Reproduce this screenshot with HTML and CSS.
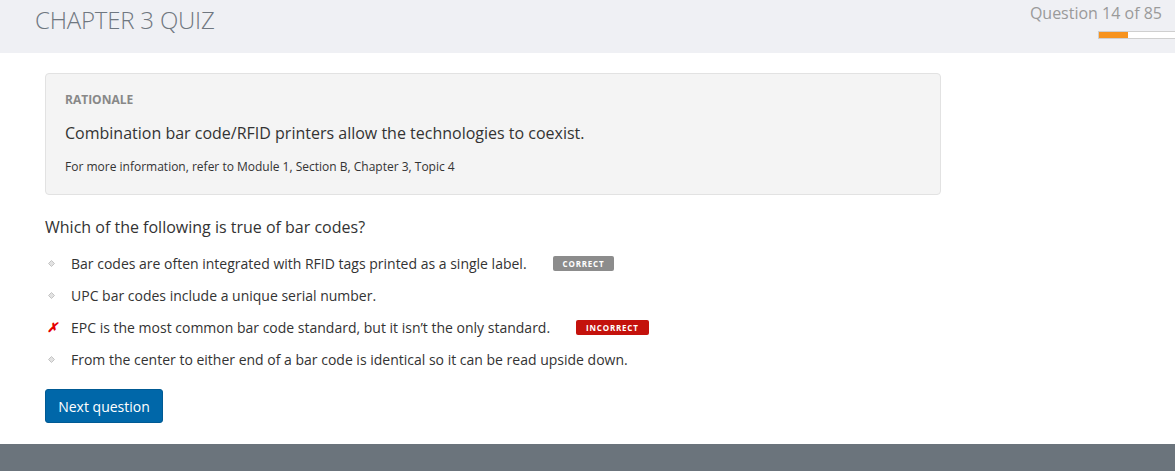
FILE: index.html
```html
<!DOCTYPE html>
<html>
<head>
<meta charset="utf-8">
<link rel="stylesheet" href="styles.css">
</head>
<body>
<header class="topbar">
  <h1 class="title">CHAPTER 3 QUIZ</h1>
  <div class="progress">
    <div class="progress-label">Question 14 of 85</div>
    <div class="progress-track"><div class="progress-fill" style="width:29px"></div></div>
  </div>
</header>
<main class="content">
  <section class="rationale">
    <div class="rationale-head">RATIONALE</div>
    <p class="rationale-text">Combination bar code/RFID printers allow the technologies to coexist.</p>
    <p class="rationale-ref">For more information, refer to Module 1, Section B, Chapter 3, Topic 4</p>
  </section>
  <h2 class="question">Which of the following is true of bar codes?</h2>
  <ul class="options">
    <li class="option"><span class="mark"><svg class="dot" width="7" height="7" viewBox="0 0 7 7"><path d="M3.5 0.5 L6.5 3.5 L3.5 6.5 L0.5 3.5 Z" fill="#e2e2e2" stroke="#c4c4c4" stroke-width="1"/></svg></span><span class="opt-text">Bar codes are often integrated with RFID tags printed as a single label.</span><span class="badge badge-correct">CORRECT</span></li>
    <li class="option"><span class="mark"><svg class="dot" width="7" height="7" viewBox="0 0 7 7"><path d="M3.5 0.5 L6.5 3.5 L3.5 6.5 L0.5 3.5 Z" fill="#e2e2e2" stroke="#c4c4c4" stroke-width="1"/></svg></span><span class="opt-text">UPC bar codes include a unique serial number.</span></li>
    <li class="option"><span class="mark cross">&#x2717;</span><span class="opt-text">EPC is the most common bar code standard, but it isn’t the only standard.</span><span class="badge badge-incorrect">INCORRECT</span></li>
    <li class="option"><span class="mark"><svg class="dot" width="7" height="7" viewBox="0 0 7 7"><path d="M3.5 0.5 L6.5 3.5 L3.5 6.5 L0.5 3.5 Z" fill="#e2e2e2" stroke="#c4c4c4" stroke-width="1"/></svg></span><span class="opt-text">From the center to either end of a bar code is identical so it can be read upside down.</span></li>
  </ul>
  <button class="next-btn">Next question</button>
</main>
<footer class="footer"></footer>
</body>
</html>
```
FILE: styles.css
```css
* { box-sizing: border-box; }
html, body { margin: 0; padding: 0; }
body {
  font-family: "Open Sans", "Liberation Sans", sans-serif;
  color: #333;
  background: #fff;
  width: 1175px;
  height: 471px;
  overflow: hidden;
  display: flex;
  flex-direction: column;
}
.topbar {
  height: 53px;
  background: #eff0f4;
  display: flex;
  justify-content: space-between;
  align-items: flex-start;
  flex-shrink: 0;
}
.title {
  margin: 5px 0 0 35px;
  font-size: 24px;
  font-weight: 300;
  color: #6f7780;
  line-height: 30px;
  letter-spacing: -0.2px;
}
.progress {
  display: flex;
  flex-direction: column;
  align-items: flex-end;
  padding-top: 3px;
}
.progress-label {
  font-size: 16px;
  color: #9a9a9a;
  line-height: 20px;
  margin-right: 13px;
}
.progress-track {
  margin-top: 8px;
  width: 77px;
  height: 8px;
  background: #fff;
  border: 1px solid #cfcfcf;
  border-right: none;
  display: flex;
}
.progress-fill {
  background: #f7931e;
  height: 100%;
}
.content {
  flex: 1;
  padding: 20px 0 0 45px;
}
.rationale {
  width: 896px;
  height: 122px;
  background: #f4f4f4;
  border: 1px solid #e2e2e2;
  border-radius: 4px;
  padding: 18px 19px 0;
}
.rationale-head {
  font-size: 12px;
  font-weight: 700;
  color: #888;
  line-height: 16px;
}
.rationale-text {
  margin: 14px 0 0;
  font-size: 16px;
  line-height: 22px;
  color: #333;
}
.rationale-ref {
  margin: 15px 0 0;
  font-size: 12px;
  line-height: 16px;
  color: #333;
}
.question {
  margin: 21px 0 0;
  font-size: 16px;
  font-weight: 400;
  line-height: 22px;
  color: #333;
}
.options {
  list-style: none;
  margin: 9px 0 0;
  padding: 0;
}
.option {
  display: flex;
  align-items: center;
  height: 32px;
  font-size: 14px;
}
.mark {
  width: 26px;
  padding-left: 2px;
  flex-shrink: 0;
  display: flex;
  align-items: center;
}
.dot {
  display: block;
  margin-left: 1px;
}
.cross {
  color: #e60000;
  font-size: 13px;
  font-weight: 700;
  font-style: italic;
}
.opt-text { color: #333; }
.badge {
  margin-left: 26px;
  font-size: 8px;
  font-weight: 700;
  letter-spacing: 0.8px;
  color: #fff;
  line-height: 15px;
  height: 15px;
  padding: 0 10px;
  border-radius: 2px;
}
.badge-correct { background: #8c8c8c; }
.badge-incorrect { background: #c4120c; }
.next-btn {
  margin-top: 14px;
  height: 34px;
  width: 118px;
  background: #0067a9;
  color: #fff;
  border: 1px solid #005a94;
  border-radius: 3px;
  font-family: "Open Sans", "Liberation Sans", sans-serif;
  font-size: 14px;
  padding: 0;
}
.footer {
  height: 27px;
  background: #6b747c;
  flex-shrink: 0;
}
```
